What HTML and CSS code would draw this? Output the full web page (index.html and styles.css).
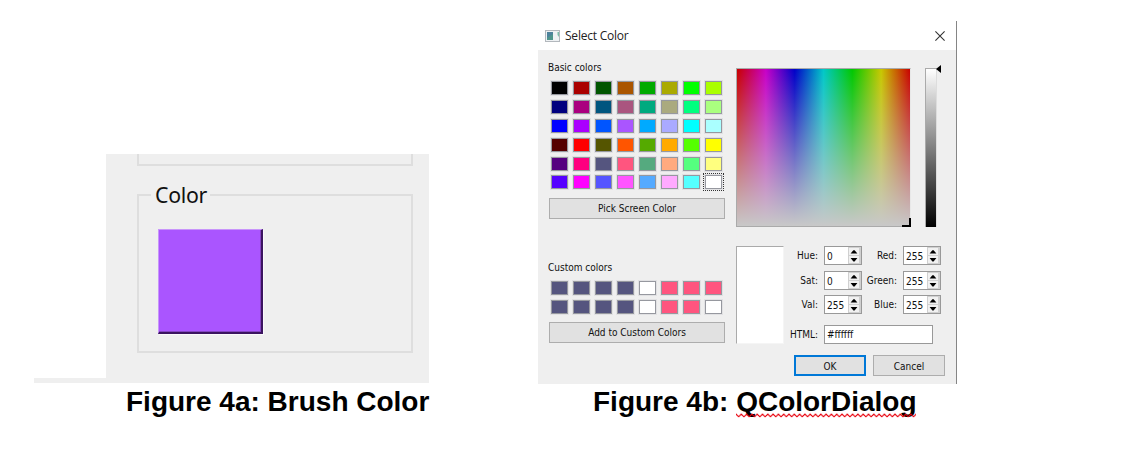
FILE: index.html
```html
<!DOCTYPE html>
<html lang="en">
<head>
<meta charset="utf-8">
<title>Brush Color and QColorDialog</title>
<link rel="stylesheet" href="styles.css">
</head>
<body>
<main class="page">
  <figure class="figure figure-a">
    <div class="shot">
      <div class="strip"></div>
      <div class="panel">
        <div class="group-end"></div>
        <fieldset class="group">
          <legend>Color</legend>
          <div class="brush"></div>
        </fieldset>
      </div>
    </div>
    <figcaption class="caption caption-a">Figure 4a: Brush Color</figcaption>
  </figure>

  <figure class="figure figure-b">
    <div class="dialog">
      <header class="titlebar">
        <svg class="app-icon" width="15" height="12" viewBox="0 0 15 12">
          <rect x=".5" y=".5" width="14" height="11" fill="#eef1f3" stroke="#b3b8bd"/>
          <rect x="2" y="2" width="6" height="8" fill="#4f958c"/>
          <path d="M2 2h6v2L2 8z" fill="#4d829b"/>
          <path d="M12.5 2H14v5l-1.5-2z" fill="#7dbca9"/>
        </svg>
        <span class="title">Select Color</span>
        <svg class="close" width="10" height="10" viewBox="0 0 10 10"><path d="M.4.4l9.2 9.2M9.6.4L.4 9.6" stroke="#333" stroke-width="1.1"/></svg>
      </header>
      <div class="body">
        <section class="left">
          <div class="label basic-label">Basic colors</div>
          <div class="swatches basic" id="basic"></div>
          <div class="button wide pick"><span>Pick Screen Color</span></div>
          <div class="label custom-label">Custom colors</div>
          <div class="swatches custom" id="custom"></div>
          <div class="button wide add"><span>Add to Custom Colors</span></div>
        </section>
        <section class="right">
          <div class="pickers">
            <div class="spectrum"><svg class="corner" width="9" height="9" viewBox="0 0 9 9"><path d="M0 8h8V0" fill="none" stroke="#000" stroke-width="2"/></svg></div>
            <div class="value-bar"></div>
            <svg class="arrow" width="5" height="8" viewBox="0 0 5 8"><path d="M5 0v8L0 4z"/></svg>
          </div>
          <div class="details">
            <div class="preview"></div>
            <div class="fields">
              <div class="spins" id="spins"></div>
              <div class="html-row"><span class="name">HTML:</span><span class="input">#ffffff</span></div>
            </div>
          </div>
          <div class="actions">
            <div class="button ok"><span>OK</span></div>
            <div class="button"><span>Cancel</span></div>
          </div>
        </section>
      </div>
    </div>
    <figcaption class="caption caption-b">Figure 4b: <span class="spelled">QColorDialog<svg class="wave" width="180" height="5"><defs><pattern id="zig" width="5.3" height="5" patternUnits="userSpaceOnUse"><path d="M-.5 .6L2.65 3.8L5.8 .6" fill="none" stroke="#e8000b" stroke-width="1.15"/></pattern></defs><rect width="180" height="5" fill="url(#zig)"/></svg></span></figcaption>
  </figure>
</main>
<script src="script.js"></script>
</body>
</html>
```
FILE: styles.css
```css
* { box-sizing: border-box; }
body { margin: 0; background: #fff; }
.page { display: flex; align-items: flex-start; width: 1126px; height: 449px; padding-left: 34px; overflow: hidden; }
.figure { margin: 0; }
.figure-a { width: 395px; padding-top: 154px; }
.figure-b { width: 419px; margin-left: 109px; padding-top: 21px; }

.shot { display: flex; align-items: flex-end; }
.strip { width: 72px; height: 5px; background: #efefef; }
.panel { width: 323px; height: 229px; padding: 0 16px 0 31px; background: #efefef; }
.group-end { height: 12px; border: 2px solid #dedede; border-top: 0; }
.group { height: 172px; min-width: 0; margin: 15px 0 0; padding: 0 0 0 19px; border: 2px solid #dedede; }
.group legend { height: 28px; margin-left: -7px; padding: 0 3px 0 4px; font: 21.3px/27px "Noto Sans", sans-serif; letter-spacing: -.3px; color: #111; }
.brush { width: 105px; height: 105px; margin-top: 20px; background: #aa55ff; border: 1px solid #c895fa; border-right: 2px solid #3b145f; border-bottom: 2px solid #3b145f; box-shadow: inset -1px -1px #8445c3, 1px 1px #fafafa; }

.caption { height: 32px; font: bold 28px/32px "Liberation Sans", Arial, sans-serif; color: #000; white-space: nowrap; }
.caption-a { margin: 3px 0 0 92px; }
.caption-b { margin: 2px 0 0 55px; }
.spelled { position: relative; }
.wave { position: absolute; left: 0; bottom: -1px; }

.dialog { height: 363px; background: #efefef; border-right: 1px solid #858585; font: 10px/14px "DejaVu Sans Condensed", "DejaVu Sans", sans-serif; color: #111; }
.titlebar { display: flex; align-items: center; height: 29px; padding: 0 11px 0 7px; background: #fff; }
.title { margin-left: 5px; font: 12px/18px "Open Sans", sans-serif; letter-spacing: -.22px; color: #222; }
.close { margin-left: auto; }
.body { display: flex; padding: 0 0 0 11px; }
.left { width: 175px; }
.right { width: 209px; margin-left: 12px; padding-top: 18px; }
.label { height: 14px; margin-left: -1px; white-space: nowrap; }
.basic-label { margin-top: 11px; }
.custom-label { margin-top: 42px; }
.swatches { display: grid; grid-template-columns: repeat(8, 17px); column-gap: 5px; row-gap: 5px; margin-left: 2px; }
.basic { margin-top: 6px; row-gap: 4.9px; }
.custom { margin-top: 6px; }
.swatch { height: 14px; border: 1px solid #96989f; box-shadow: 0 0 0 1px #e1e1e3; }
.swatch.current { outline: 1px dotted #333; outline-offset: 1px; }
.button { display: flex; align-items: center; justify-content: center; width: 72px; height: 21px; padding-top: 2px; background: #e1e1e1; border: 1px solid #adadad; white-space: nowrap; }
.button.wide { width: 176px; }
.pick { margin-top: 8.5px; }
.add { margin-top: 8px; }
.button.ok { border: 2px solid #0078d7; }

.pickers { display: flex; align-items: flex-start; height: 159px; }
.spectrum { position: relative; width: 175px; height: 159px; border: 1px solid #aaa; border-right-color: #e8e8e8; background: linear-gradient(to bottom, rgba(200,200,200,0), #c8c8c8), linear-gradient(to right, #c80000, #c800c8 16.67%, #0000c8 33.33%, #00c8c8 50%, #00c800 66.67%, #c8c800 83.33%, #c80000); }
.corner { position: absolute; right: -1px; bottom: -1px; }
.value-bar { width: 12px; height: 159px; margin-left: 14px; border: 1px solid #aaa; border-right-color: #ddd; border-bottom: 0; background: linear-gradient(#fff, #000); }
.arrow { margin: -3px 0 0 -1px; }
.details { display: flex; height: 98px; margin-top: 19px; }
.preview { width: 48px; height: 98px; background: #fff; border: 1px solid #aaa; border-right-color: #f5f5f5; border-bottom-color: #f5f5f5; }
.fields { width: 161px; }
.spins { display: grid; grid-template-columns: 40px 38px 41px 38px; grid-auto-rows: 19px; row-gap: 5.5px; }
.name { padding-right: 6px; line-height: 20px; text-align: right; white-space: nowrap; }
.spin { display: flex; justify-content: space-between; height: 19px; padding-left: 2px; background: #fff; border: 1px solid #999; line-height: 19px; }
.steps { flex: none; width: 13px; height: 17px; }
.html-row { display: flex; margin-top: 11px; }
.html-row .name { flex: none; width: 40px; }
.input { width: 109px; height: 19px; padding-left: 2px; background: #fff; border: 1px solid #999; line-height: 18px; }
.actions { display: flex; justify-content: flex-end; gap: 7px; margin-top: 11px; }
```
FILE: script.js
```js
const basic = [
  '#000000 #aa0000 #005500 #aa5500 #00aa00 #aaaa00 #00ff00 #aaff00',
  '#00007f #aa007f #00557f #aa557f #00aa7f #aaaa7f #00ff7f #aaff7f',
  '#0000ff #aa00ff #0055ff #aa55ff #00aaff #aaaaff #00ffff #aaffff',
  '#550000 #ff0000 #555500 #ff5500 #55aa00 #ffaa00 #55ff00 #ffff00',
  '#55007f #ff007f #55557f #ff557f #55aa7f #ffaa7f #55ff7f #ffff7f',
  '#5500ff #ff00ff #5555ff #ff55ff #55aaff #ffaaff #55ffff #ffffff'
].join(' ').split(' ');
const blue = '#55557f', pink = '#ff557f', white = '#ffffff';
const custom = [blue, blue, blue, blue, white, pink, pink, pink,
                blue, blue, blue, blue, white, pink, pink, white];

function fill(id, colors) {
  document.getElementById(id).innerHTML = colors
    .map(c => `<div class="swatch" style="background:${c}"></div>`).join('');
}
fill('basic', basic);
fill('custom', custom);
document.getElementById('basic').lastElementChild.classList.add('current');

const steps = '<svg class="steps" viewBox="0 0 13 17"><path d="M0 0h13v17H0z" fill="#d0d0d0"/><path d="M1 1h10v7H1zM1 9h10v7H1z" fill="#f1f1f1"/><path d="M2.6 6.6h6.8L6.6 3.2h-1.2zM2.6 11h6.8l-2.8 3.4h-1.2z" fill="#000"/></svg>';
document.getElementById('spins').innerHTML = [
  ['Hue:', 0], ['Red:', 255], ['Sat:', 0], ['Green:', 255], ['Val:', 255], ['Blue:', 255]
].map(([name, value]) => `<span class="name">${name}</span><span class="spin">${value}${steps}</span>`).join('');
```
